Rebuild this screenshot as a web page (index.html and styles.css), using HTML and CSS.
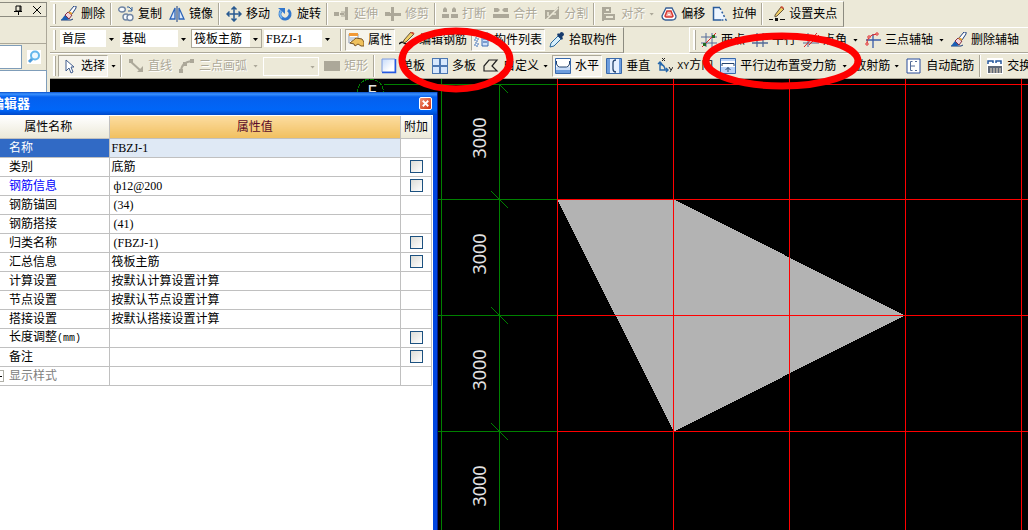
FILE: index.html
```html
<!DOCTYPE html>
<html lang="zh-CN">
<head>
<meta charset="utf-8">
<title>钢筋布置</title>
<link rel="stylesheet" href="styles.css">
</head>
<body>
<svg class="defs" aria-hidden="true">
  <symbol id="brush" viewBox="0 0 16 16"><path d="M0 14h10l2-1" stroke="#173a7a" fill="none"/><path d="M0 14l4-5 4 4-2 1z" fill="#1c5fb4"/><path d="M4 9l3-3 4 3-3 4z" fill="#f3d3dc" stroke="#803048"/><path d="M8 6l5-6h2v2l-4 6z" fill="#fff" stroke="#1c3f7c"/><path d="M8 6l3 2" stroke="#e8a030" stroke-width="2"/></symbol>
  <symbol id="copy" viewBox="0 0 16 16"><g fill="#f8fbff" stroke="#7186a4" stroke-width="1.4"><ellipse cx="4" cy="3.500" rx="3.300" ry="2.500"/><circle cx="8" cy="11" r="3"/><circle cx="12" cy="11.500" r="3"/></g><path d="M9 1h2l3 3M14 1v4h-4" fill="none" stroke="#2d5c9c"/></symbol>
  <symbol id="mirror" viewBox="0 0 16 16"><path d="M6 2v11H1zM10 2v11h5z" fill="#dce9fb" stroke="#2c64b8" stroke-width="1.300"/><path d="M8 0v16" stroke="#173a7a"/></symbol>
  <symbol id="move" viewBox="0 0 16 16"><path d="M8 1v14M1 8h14M5.500 3.500L8 1l2.500 2.500M5.500 12.500L8 15l2.500-2.500M3.500 5.500L1 8l2.500 2.500M12.500 5.500L15 8l-2.500 2.500" fill="none" stroke="#285a91" stroke-width="1.500"/></symbol>
  <symbol id="rotate" viewBox="0 0 16 16"><path d="M4 5a5 5 0 1 0 7-1" fill="none" stroke="#3277cc" stroke-width="3"/><path d="M4 5a5 5 0 0 0 1 7" fill="none" stroke="#77b8f2" stroke-width="1.500"/><path d="M1 2h7v6z" fill="#3277cc"/></symbol>
  <symbol id="extend" viewBox="0 0 16 16"><path d="M0 6h5v4H0zM6 7h4v2H6zM11 1h3v13h-3z" fill="#aca899"/><path d="M7 6h4v4H7" stroke="#aca899" fill="none"/></symbol>
  <symbol id="trim" viewBox="0 0 16 16"><path d="M0 6h5v4H0zM6 1h3v6h7v3H9v5H6v-5H4V7h2z" fill="#aca899"/></symbol>
  <symbol id="break" viewBox="0 0 16 16"><path d="M1 3l2-2 2 2v3H1zM10 3l2-2 2 2v3h-4zM0 8h7v4H0zM9 8h7v4H9z" fill="#aca899"/></symbol>
  <symbol id="merge" viewBox="0 0 16 16"><path d="M1 2h4l2 2-2 2H1zM15 2h-4L9 4l2 2h4zM0 8h16v4H0z" fill="#aca899"/></symbol>
  <symbol id="split" viewBox="0 0 16 16"><path d="M1 4h10l4-4v13H1zM0 14h9" fill="#aca899"/><path d="M2 14L14 2M4 6v4M8 8h4" stroke="#ece9d8" stroke-width="1.500"/></symbol>
  <symbol id="align" viewBox="0 0 16 16"><path d="M2 1v14" stroke="#aca899" stroke-width="2"/><path d="M4 2h5v4H4zM4 9h9v4H4z" fill="none" stroke="#aca899" stroke-width="2"/></symbol>
  <symbol id="offset" viewBox="0 0 16 16"><path d="M5 2h6l4 8q0 4-4 4H4q-3-1-3-4z" fill="#fff" stroke="#385f94" stroke-width="1.300"/><path d="M6 5h4l2 5-1 1H5L4 10z" fill="#f2b5ae" stroke="#d73732" stroke-width="1.500"/><path d="M7 8h2v1H7z" fill="#fff"/></symbol>
  <symbol id="stretch" viewBox="0 0 16 16"><path d="M2 1h6l6 13H2z" fill="#eef6ff"/><path d="M9 14H1.500V1.500H8" fill="none" stroke="#2a5c9c" stroke-width="1.500"/><path d="M8 2l6 12H8" fill="none" stroke="#2a5c9c" stroke-width="1.500" stroke-dasharray="2 2"/></symbol>
  <symbol id="pencil" viewBox="0 0 16 16"><path d="M6 9l6-8 3 2-7 7-2 1z" fill="#f0ce66" stroke="#62533b"/><path d="M11 1l3 2 1-1-2-2z" fill="#cf5038"/><path d="M0 13.500h4M11 13.500h5" stroke="#111"/><path d="M6 12h3v3H6z" fill="#111"/></symbol>
  <symbol id="edit" viewBox="0 0 16 16"><path d="M0 12q3-3 5-1t11 0" fill="none" stroke="#111" stroke-width="1.500"/><path d="M5 8l7-8 3 2-8 8-3 1z" fill="#f0ce66" stroke="#62533b"/><path d="M12 0l3 2" stroke="#cf5038" stroke-width="2"/></symbol>
  <symbol id="prop" viewBox="0 0 16 16"><path d="M1 2h9v9H1z" fill="#fff" stroke="#8d9ab0"/><path d="M1 1h9v3H1z" fill="#f29a36"/><path d="M2 6h6M2 8h3" stroke="#91a5c0"/><path d="M2 11l6-5 6 1 2 3v4h-3l-3-2-3 2-1-2z" fill="#efc05b" stroke="#7a5522"/></symbol>
  <symbol id="list" viewBox="0 0 16 16"><path d="M1 1h3v3H1zM1 6h3v3H1zM1 11h3v3H1z" fill="#fff" stroke="#3668ae" stroke-dasharray="2 1"/><path d="M8 1h6v13H8z" fill="#cfe1fb" stroke="#3d6db3"/><path d="M9 4h4M9 7h4M9 10h4" stroke="#2456a0"/></symbol>
  <symbol id="dropper" viewBox="0 0 16 16"><path d="M1 15l1-4 7-7 3 3-7 7z" fill="#d5effc" stroke="#28679d"/><path d="M8 3l5 5 1-2-1-1 2-2q0-3-3-3l-2 2-1-1z" fill="#153a6c"/></symbol>
  <symbol id="axis" viewBox="0 0 16 16"><path d="M5 1v14M11 1v14M0 5h16M0 11h16" stroke="#526b98"/><path d="M1 15L15 1" stroke="#d22"/><path d="M2 11h3v3H2zM11 3h3v3h-3z" fill="#236b21"/></symbol>
  <symbol id="axis2" viewBox="0 0 16 16"><path d="M5 1v14M11 1v14M0 5h16M0 11h16" stroke="#526b98" stroke-width="1.300"/></symbol>
  <symbol id="axis3" viewBox="0 0 16 16"><path d="M5 1v14M0 6h16M0 11h16" stroke="#526b98"/><path d="M1 15L14 1M6 13L16 3" stroke="#d22"/></symbol>
  <symbol id="arcaxis" viewBox="0 0 16 16"><path d="M8 2v14M1 8h15" stroke="#385ca8" stroke-width="1.300"/><path d="M2 13Q1 3 12 2" fill="none" stroke="#d22"/><g fill="#fff" stroke="#d22"><circle cx="2" cy="12" r="1.200"/><circle cx="4" cy="5" r="1.200"/><circle cx="12" cy="2" r="1.200"/></g></symbol>
  <symbol id="cursor" viewBox="0 0 16 16"><path d="M5 2v11l3-3 2 5 2-1-2-5h3z" fill="#fff" stroke="#415d8e"/></symbol>
  <symbol id="line" viewBox="0 0 16 16"><path d="M2 3l11 10" stroke="#aca899" stroke-width="2"/><path d="M1 1h4v4H1zM9 14h6V8z" fill="#aca899"/></symbol>
  <symbol id="arc" viewBox="0 0 16 16"><path d="M2 14Q2 4 13 3" fill="none" stroke="#aca899" stroke-width="2"/><path d="M0 11h4v4H0zM4 4h4v4H4zM11 1h4v4h-4z" fill="#aca899"/></symbol>
  <symbol id="rect" viewBox="0 0 16 16"><path d="M0 3h16v10H0z" fill="#aca899"/></symbol>
  <linearGradient id="g" x2="1" y2="1"><stop stop-color="#c5dafa"/><stop offset=".7" stop-color="#fff"/></linearGradient>
  <symbol id="single" viewBox="0 0 16 16"><path d="M1 1h13v13H1z" fill="url(#g)" stroke="#7d9be0"/><path d="M1 14.500h13.500V1" fill="none" stroke="#2459e2" stroke-width="1.500"/></symbol>
  <symbol id="multi" viewBox="0 0 16 16"><path d="M0 0h16v16H0z" fill="#4d78b2"/><path d="M1 1h6v6H1zM9 1h6v6H9zM1 9h6v6H1zM9 9h6v6H9z" fill="#d7e8fd"/></symbol>
  <symbol id="poly" viewBox="0 0 16 16"><path d="M1 13V8l5-6h8L9 8l5 5z" fill="none" stroke="#222" stroke-width="1.200"/></symbol>
  <symbol id="horiz" viewBox="0 0 16 16"><path d="M.500.500h15v15H.500z" fill="#c8dcf8" stroke="#3869ac"/><path d="M1 1h14v8H1z" fill="#fff"/><path d="M1.500 3v3q1 3 3 3h7q2 0 3-3V3" fill="none" stroke="#24446f"/><path d="M1 12h14v3H1z" fill="#6d9ddd"/></symbol>
  <symbol id="vert" viewBox="0 0 16 16"><path d="M.500.500h15v15H.500z" fill="#e5f0ff" stroke="#3869ac"/><path d="M1 1h3v14H1zM13 1h2v14h-2z" fill="#6d9ddd"/><path d="M10 2Q7 2 7 5v6q0 3 3 3" fill="none" stroke="#24446f" stroke-width="1.300"/></symbol>
  <symbol id="xy" viewBox="0 0 16 16"><path d="M3 4v8h8M1 6l2-2 2 2M9 10l2 2-2 2M3 6q5 1 5 6" fill="none" stroke="#2567ab" stroke-width="1.400"/><path d="M5 0l3 3M8 0L5 3M12 9l2 3M16 9l-3 5" stroke="#222"/></symbol>
  <symbol id="edge" viewBox="0 0 16 16"><path d="M.500.500h15v15H.500z" fill="#b9d3f8" stroke="#3869ac"/><path d="M1 3h14v6H1z" fill="#fff"/><path d="M2 8V5.500h12V8M8 14V9.500M5.500 12L8 9.500l2.500 2.500" fill="none" stroke="#24446f"/></symbol>
  <symbol id="auto" viewBox="0 0 16 16"><path d="M1 1h13v14H1z" fill="#fff" stroke="#294d9c"/><path d="M6.500 3.500h-2v9h2M9 3.500h2M9 12.500h2M4 8h5" fill="none" stroke="#526b98"/></symbol>
  <symbol id="swap" viewBox="0 0 16 16"><path d="M0 0h16v16H0z" fill="#fff"/><path d="M1 6V3h5v2M9 5V3h5v3" fill="none" stroke="#24579c" stroke-width="1.500"/><path d="M1 8h14v7H1z" fill="#5d6776"/><path d="M4 10v5M7 10v5M10 10v5M13 10v5" stroke="#f4e2c7"/></symbol>
</svg>

<div class="app">
  <aside class="side">
    <div class="side-title">
      <button class="mini" aria-label="固定"><svg viewBox="0 0 10 10"><path d="M3 1h5v5H3zM1 6.500h8M5.500 6v4M7 1v5" fill="none" stroke="#000"/></svg></button>
      <button class="mini" aria-label="关闭"><svg viewBox="0 0 10 10"><path d="M1 1l8 8M9 1L1 9" stroke="#000"/></svg></button>
    </div>
    <div class="side-gap"></div>
    <div class="search">
      <input type="text" aria-label="搜索">
      <button aria-label="查找"><svg viewBox="0 0 14 14"><path d="M6 8l-4 4" stroke="#4d9ddd" stroke-width="3"/><circle cx="8" cy="5.500" r="4" fill="#edf8ff" stroke="#65b7ec" stroke-width="2"/></svg></button>
    </div>
    <div class="side-list"></div>
  </aside>

  <main class="work">
    <div class="bars">
      <div class="row">
        <div class="bar bar-end">
          <i class="grip"></i>
          <button class="tool"><svg><use href="#brush"/></svg>删除</button><i class="sep"></i>
          <button class="tool"><svg><use href="#copy"/></svg>复制</button>
          <button class="tool"><svg><use href="#mirror"/></svg>镜像</button><i class="sep"></i>
          <button class="tool"><svg><use href="#move"/></svg>移动</button>
          <button class="tool"><svg><use href="#rotate"/></svg>旋转</button><i class="sep"></i>
          <button class="tool" disabled><svg><use href="#extend"/></svg>延伸</button>
          <button class="tool" disabled><svg><use href="#trim"/></svg>修剪</button><i class="sep"></i>
          <button class="tool" disabled><svg><use href="#break"/></svg>打断</button>
          <button class="tool" disabled><svg><use href="#merge"/></svg>合并</button>
          <button class="tool" disabled><svg><use href="#split"/></svg>分割</button><i class="sep"></i>
          <button class="tool drop" disabled><svg><use href="#align"/></svg>对齐</button>
          <button class="tool"><svg><use href="#offset"/></svg>偏移</button>
          <button class="tool"><svg><use href="#stretch"/></svg>拉伸</button><i class="sep"></i>
          <button class="tool"><svg><use href="#pencil"/></svg>设置夹点</button>
        </div>
      </div>
      <div class="row">
        <div class="bar">
          <i class="grip"></i>
          <div class="combos">
            <span class="combo combo-s"><select aria-label="楼层"><option>首层</option></select></span>
            <span class="combo"><select aria-label="构件类型"><option>基础</option></select></span>
            <span class="combo combo-hot"><select aria-label="构件"><option>筏板主筋</option></select></span>
            <span class="combo"><select aria-label="名称"><option>FBZJ-1</option></select></span>
          </div>
        </div>
        <div class="bar bar-end">
          <i class="sep"></i>
          <button class="tool on"><svg><use href="#prop"/></svg>属性</button>
          <button class="tool"><svg><use href="#edit"/></svg>编辑钢筋</button>
          <button class="tool on"><svg><use href="#list"/></svg>构件列表</button>
          <button class="tool"><svg><use href="#dropper"/></svg>拾取构件</button>
        </div>
        <div class="bar bar-right">
          <i class="grip"></i>
          <button class="tool"><svg><use href="#axis"/></svg>两点</button>
          <button class="tool"><svg><use href="#axis2"/></svg>平行</button>
          <button class="tool drop wide"><svg><use href="#axis3"/></svg>点角</button>
          <button class="tool drop wide"><svg><use href="#arcaxis"/></svg>三点辅轴</button>
          <button class="tool"><svg><use href="#brush"/></svg>删除辅轴</button>
        </div>
      </div>
      <div class="row">
        <div class="bar bar-full">
          <i class="grip"></i>
          <button class="tool on"><svg><use href="#cursor"/></svg>选择</button>
          <button class="arrow" aria-label="选择方式"></button><i class="sep"></i>
          <button class="tool" disabled><svg><use href="#line"/></svg>直线</button>
          <button class="tool drop wide" disabled><svg><use href="#arc"/></svg>三点画弧</button>
          <span class="combo combo-off"><select aria-label="画法" disabled><option></option></select></span>
          <button class="tool" disabled><svg><use href="#rect"/></svg>矩形</button><i class="sep"></i>
          <button class="tool"><svg><use href="#single"/></svg>单板</button>
          <button class="tool"><svg><use href="#multi"/></svg>多板</button>
          <button class="tool drop"><svg><use href="#poly"/></svg>自定义</button>
          <button class="tool on"><svg><use href="#horiz"/></svg>水平</button>
          <button class="tool"><svg><use href="#vert"/></svg>垂直</button>
          <button class="tool"><svg><use href="#xy"/></svg><span><span class="mono">XY</span>方向</span></button>
          <button class="tool drop wide"><svg><use href="#edge"/></svg>平行边布置受力筋</button>
          <button class="tool drop">放射筋</button>
          <button class="tool"><svg><use href="#auto"/></svg>自动配筋</button><i class="sep"></i>
          <button class="tool"><svg><use href="#swap"/></svg>交换</button>
        </div>
      </div>
    </div>
    <div class="canvas">
      <svg class="drawing" role="img" aria-label="筏板平面图">
        <g transform="translate(-50 -79)">
          <path d="M557 199.500H674L905 315.500 674 431.500z" fill="#b3b3b3" shape-rendering="crispEdges"/>
          <g fill="none" stroke="#008000" shape-rendering="crispEdges">
            <path d="M384 84.500H557M50 199.500H557M50 315.500H557M50 431.500H557M441.500 79V2000M499.500 84V2000"/>
            <path d="M499 84l9 9M491 191l17 17M491 307l17 17M491 423l17 17"/>
            <circle cx="370.500" cy="92" r="13" stroke-dasharray="4 1"/>
          </g>
          <path d="M557 84.500H3000M557 199.500H3000M557 315.500H3000M557 431.500H3000M557.500 79V2000M673.500 79V2000M789.500 79V2000M905.500 79V2000M1021.500 79V2000" stroke="#f00" shape-rendering="crispEdges"/>
          <g class="dims">
            <text transform="translate(486 138) rotate(-90)">3000</text>
            <text transform="translate(486 254) rotate(-90)">3000</text>
            <text transform="translate(486 370) rotate(-90)">3000</text>
            <text transform="translate(486 486) rotate(-90)">3000</text>
            <text x="372" y="98">F</text>
          </g>
        </g>
      </svg>
    </div>
  </main>
</div>

<section class="window">
  <header class="caption"><h1>编辑器</h1><button class="close" aria-label="关闭"><svg viewBox="0 0 12 12"><path d="M3 3l6 6M9 3L3 9" stroke="#fff" stroke-width="2"/></svg></button></header>
  <div class="client">
    <table class="props">
      <colgroup><col class="c-name"><col><col class="c-add"></colgroup>
      <thead><tr><th>属性名称</th><th class="hot">属性值</th><th>附加</th></tr></thead>
      <tbody>
        <tr class="sel"><td>名称</td><td>FBZJ-1</td><td></td></tr>
        <tr><td>类别</td><td>底筋</td><td><input type="checkbox" aria-label="附加 类别"></td></tr>
        <tr><td class="key">钢筋信息</td><td><span class="in">ф12@200</span></td><td><input type="checkbox" aria-label="附加 钢筋信息"></td></tr>
        <tr><td>钢筋锚固</td><td><span class="in">(34)</span></td><td></td></tr>
        <tr><td>钢筋搭接</td><td><span class="in">(41)</span></td><td></td></tr>
        <tr><td>归类名称</td><td><span class="in">(FBZJ-1)</span></td><td><input type="checkbox" aria-label="附加 归类名称"></td></tr>
        <tr><td>汇总信息</td><td>筏板主筋</td><td><input type="checkbox" aria-label="附加 汇总信息"></td></tr>
        <tr><td>计算设置</td><td>按默认计算设置计算</td><td></td></tr>
        <tr><td>节点设置</td><td>按默认节点设置计算</td><td></td></tr>
        <tr><td>搭接设置</td><td>按默认搭接设置计算</td><td></td></tr>
        <tr><td>长度调整<span class="mono">(mm)</span></td><td></td><td><input type="checkbox" aria-label="附加 长度调整"></td></tr>
        <tr><td>备注</td><td></td><td><input type="checkbox" aria-label="附加 备注"></td></tr>
        <tr><td class="dim"><button class="expand" aria-label="展开"><svg viewBox="0 0 7 10"><path d="M1 5.500h5M3.500 3v5" stroke="#000"/></svg></button>显示样式</td><td></td><td></td></tr>
      </tbody>
    </table>
  </div>
</section>

<svg class="marks" aria-hidden="true"><g fill="none" stroke="#f00" stroke-width="7"><ellipse cx="456" cy="60" rx="54" ry="29"/><ellipse cx="782" cy="61" rx="76" ry="25"/></g></svg>
</body>
</html>
```
FILE: styles.css
```css
* { box-sizing: border-box; }

body {
  margin: 0;
  height: 100vh;
  overflow: hidden;
  position: relative;
  background: #000;
  color: #000;
  font: 12px/16px "Liberation Serif", "Noto Sans CJK SC", sans-serif;
}

button, select, input { font: inherit; color: inherit; margin: 0; }
button { border: 0; background: none; padding: 0; }
.defs { position: absolute; width: 0; height: 0; }
.mono { font-family: "Liberation Mono", monospace; font-size: 10px; }

.app { display: flex; height: 100%; }

/* side panel */
.side {
  flex: 0 0 50px;
  display: flex;
  flex-direction: column;
  background: #ece9d8;
  padding: 2px 3px 0 0;
}
.side-title {
  display: flex;
  justify-content: flex-end;
  gap: 9px;
  height: 15px;
  padding: 2px 4px 0 0;
  border: solid #8c8b80;
  border-width: 1px 1px 1px 0;
}
.mini { width: 10px; height: 10px; }
.mini svg { display: block; }
.side-gap { height: 27px; border-bottom: 1px solid #aca899; border-right: 1px solid #aca899; }
.search { display: flex; align-items: center; gap: 5px; height: 26px; border-right: 1px solid #aca899; }
.search input {
  width: 22px;
  height: 24px;
  background: #fff;
  border: solid #7f9db9;
  border-width: 1px 1px 1px 0;
}
.search button { width: 14px; height: 14px; background: #fff; }
.search svg { display: block; }
.side-list { flex: 1; background: #fff; border: solid #7f9db9; border-width: 1px 1px 0 0; }

/* toolbars */
.work { flex: 1; min-width: 0; display: flex; flex-direction: column; }
.bars { background: #ece9d8; padding-top: 1px; overflow: hidden; }
.row { display: flex; height: 26px; }
.bar {
  display: flex;
  align-items: center;
  gap: 1px;
  flex: none;
  border-top: 1px solid #fff;
  border-bottom: 1px solid #aca899;
  padding-left: 3px;
}
.bar-end { border-right: 1px solid #8c8b80; padding-right: 3px; }
.bar-right { margin-left: auto; border-left: 1px solid #fff; padding-right: 6px; }
.bar-full { flex: 1 0 auto; }
.grip { width: 3px; height: 20px; margin-right: 1px; border: solid #aca899; border-width: 0 1px 0 0; background: #fff; }
.sep { width: 2px; height: 22px; margin: 0 2px 0 1px; border-left: 1px solid #aca899; background: #fff; }

.tool {
  display: flex;
  align-items: center;
  gap: 4px;
  height: 22px;
  padding: 0 3px;
  white-space: nowrap;
}
.tool svg { width: 16px; height: 16px; flex: none; }
.tool:disabled { color: #aca899; text-shadow: 1px 1px #fff; }
.tool.on {
  padding: 0 2px;
  border: 1px solid #aca899;
  border-right-color: #fff;
  border-bottom-color: #fff;
  background: #f6f4ec;
}
.drop::after, .arrow::after, .combo::after {
  content: "";
  width: 5px;
  height: 3px;
  background: currentColor;
  clip-path: polygon(0 0, 100% 0, 50% 100%);
}
.wide::after { margin-left: 2px; }
.arrow { display: flex; width: 9px; padding-left: 2px; }

.combos { display: flex; gap: 3px; padding: 0 3px 3px 2px; }
.combo { position: relative; width: 69px; height: 17px; background: #fff; }
.combo::after { position: absolute; right: 3px; top: 8px; pointer-events: none; }
.combo select {
  display: block;
  appearance: none;
  width: 100%;
  height: 17px;
  line-height: 16px;
  padding: 0 0 0 2px;
  border: 0;
  border-right: 11px solid #ece9d8;
  background: #fff;
  opacity: 1;
}
.combo-s { width: 57px; }
.combo-hot { outline: 1px solid #aca899; }
.combo-off { width: 54px; outline: 1px solid #fff; color: #aca899; margin: 0 2px; }
.combo-off select { background: #ece9d8; }

/* drawing area */
.canvas { flex: 1; min-height: 0; background: #000; }
.drawing { display: block; width: 100%; height: 100%; }
.dims { fill: #e4e4e4; font: 18px "Noto Sans", sans-serif; text-anchor: middle; }

/* floating property window */
.window {
  position: absolute;
  left: -14px;
  top: 92px;
  bottom: -8px;
  width: 452px;
  display: flex;
  flex-direction: column;
  border-right: 1px solid #001a8c;
  background: #0046e0;
  padding-right: 4px;
}
.caption {
  display: flex;
  align-items: center;
  justify-content: space-between;
  flex: none;
  height: 23px;
  margin-right: -4px;
  padding: 0 5px;
  background: linear-gradient(#0a4fc8, #3b92ff 2px, #0560ee 5px, #0066f8 18px, #0048c8);
}
.caption h1 { margin: 0; font-size: 13px; line-height: 18px; font-weight: bold; color: #fff; }
.close { width: 13px; height: 13px; border: 1px solid #fff; border-radius: 2px; background: linear-gradient(135deg, #f09070, #d03010); }
.close svg { display: block; }
.client { flex: 1; background: #fff; padding: 1px 1px 0 0; }

.props { width: 100%; border-collapse: collapse; table-layout: fixed; }
.c-name { width: 123px; }
.c-add { width: 31px; }
.props th {
  height: 22px;
  padding: 0;
  font-weight: normal;
  border: solid #c0c0c0;
  border-width: 0 1px 1px 0;
  background: linear-gradient(#fff, #ece9d8);
}
.props th:first-child { padding-left: 2px; }
.props th.hot { background: linear-gradient(#fcdca0, #f1c060); color: #5a0a28; }
.props td { height: 19px; padding: 0 2px; line-height: 16px; border: solid #c0c0c0; border-width: 0 1px 1px 0; white-space: nowrap; }
.props td:first-child { padding-left: 23px; }
.props td:last-child { padding: 0; }
.props .sel td:first-child { background: #316ac5; color: #fff; }
.props .sel td:nth-child(2) { background: #dfe9f5; }
.props .key { color: #00f; }
.props .dim { color: #808080; position: relative; }
.in { padding-left: 2px; }
.props input {
  display: block;
  appearance: none;
  width: 13px;
  height: 13px;
  margin: 0 auto;
  border: 1px solid #1c5180;
  background: linear-gradient(135deg, #dcdcd7, #fff);
}
.expand {
  position: absolute;
  left: 9px;
  top: 3px;
  width: 9px;
  height: 12px;
  border: 1px solid #b0b0a8;
  background: #fff;
}
.expand svg { display: block; }

.marks { position: absolute; left: 0; top: 0; width: 100%; height: 100%; pointer-events: none; }
```
